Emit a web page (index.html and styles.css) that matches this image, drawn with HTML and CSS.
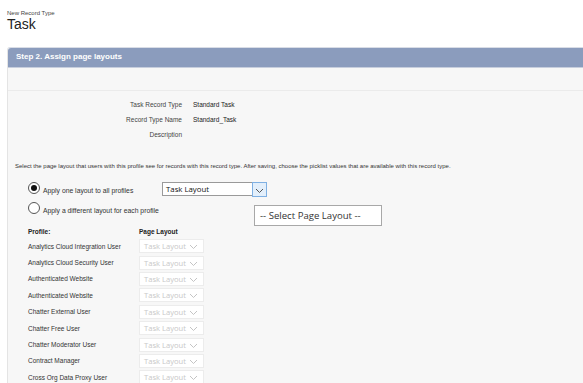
FILE: index.html
```html
<!DOCTYPE html>
<html>
<head>
<meta charset="utf-8">
<link rel="stylesheet" href="styles.css">
</head>
<body>
<div class="page">
  <div class="title">
    <div class="title-sub">New Record Type</div>
    <div class="title-main">Task</div>
  </div>
  <div class="panel">
    <div class="panel-head">Step 2. Assign page layouts</div>
    <div class="panel-top"></div>
    <div class="panel-body">
      <div class="details">
        <div class="dl">Task Record Type</div><div class="dv">Standard Task</div>
        <div class="dl">Record Type Name</div><div class="dv">Standard_Task</div>
        <div class="dl">Description</div><div class="dv"></div>
      </div>
      <p class="intro">Select the page layout that users with this profile see for records with this record type. After saving, choose the picklist values that are available with this record type.</p>
      <div class="options">
        <div class="opt">
          <span class="radio checked"></span>
          <span class="opt-label">Apply one layout to all profiles</span>
          <div class="sel-wrap">
            <div class="sel">Task Layout</div>
            <div class="sel-btn"><svg width="9" height="6" viewBox="0 0 9 6"><polyline points="1,1 4.5,4.5 8,1" fill="none" stroke="#555" stroke-width="1"/></svg></div>
            <div class="dropdown">-- Select Page Layout --</div>
          </div>
        </div>
        <div class="opt opt2">
          <span class="radio"></span>
          <span class="opt-label">Apply a different layout for each profile</span>
        </div>
      </div>
      <div class="profiles">
        <div class="ph">Profile:</div><div class="ph">Page Layout</div>
        <div class="pn">Analytics Cloud Integration User</div><div class="ps"><span>Task Layout</span><svg width="9" height="6" viewBox="0 0 9 6"><polyline points="1,1 4.5,4.5 8,1" fill="none" stroke="#c4c4c4" stroke-width="1"/></svg></div>
        <div class="pn">Analytics Cloud Security User</div><div class="ps"><span>Task Layout</span><svg width="9" height="6" viewBox="0 0 9 6"><polyline points="1,1 4.5,4.5 8,1" fill="none" stroke="#c4c4c4" stroke-width="1"/></svg></div>
        <div class="pn">Authenticated Website</div><div class="ps"><span>Task Layout</span><svg width="9" height="6" viewBox="0 0 9 6"><polyline points="1,1 4.5,4.5 8,1" fill="none" stroke="#c4c4c4" stroke-width="1"/></svg></div>
        <div class="pn">Authenticated Website</div><div class="ps"><span>Task Layout</span><svg width="9" height="6" viewBox="0 0 9 6"><polyline points="1,1 4.5,4.5 8,1" fill="none" stroke="#c4c4c4" stroke-width="1"/></svg></div>
        <div class="pn">Chatter External User</div><div class="ps"><span>Task Layout</span><svg width="9" height="6" viewBox="0 0 9 6"><polyline points="1,1 4.5,4.5 8,1" fill="none" stroke="#c4c4c4" stroke-width="1"/></svg></div>
        <div class="pn">Chatter Free User</div><div class="ps"><span>Task Layout</span><svg width="9" height="6" viewBox="0 0 9 6"><polyline points="1,1 4.5,4.5 8,1" fill="none" stroke="#c4c4c4" stroke-width="1"/></svg></div>
        <div class="pn">Chatter Moderator User</div><div class="ps"><span>Task Layout</span><svg width="9" height="6" viewBox="0 0 9 6"><polyline points="1,1 4.5,4.5 8,1" fill="none" stroke="#c4c4c4" stroke-width="1"/></svg></div>
        <div class="pn">Contract Manager</div><div class="ps"><span>Task Layout</span><svg width="9" height="6" viewBox="0 0 9 6"><polyline points="1,1 4.5,4.5 8,1" fill="none" stroke="#c4c4c4" stroke-width="1"/></svg></div>
        <div class="pn">Cross Org Data Proxy User</div><div class="ps"><span>Task Layout</span><svg width="9" height="6" viewBox="0 0 9 6"><polyline points="1,1 4.5,4.5 8,1" fill="none" stroke="#c4c4c4" stroke-width="1"/></svg></div>
      </div>
    </div>
  </div>
</div>
</body>
</html>
```
FILE: styles.css
```css
html, body {
  margin: 0;
  padding: 0;
  background: #fff;
  overflow: hidden;
}
body {
  font-family: "Liberation Sans", Arial, sans-serif;
  color: #333;
  height: 383px;
}
.page {
  padding-left: 7px;
  width: 600px;
}
.title {
  padding-top: 10px;
  height: 47px;
  box-sizing: border-box;
}
.title-sub {
  font-size: 6px;
  line-height: 7px;
  color: #444;
}
.title-main {
  font-size: 14px;
  line-height: 15px;
  color: #222;
}
.panel {
  background: #f7f7f7;
  border-top: 1px solid #d9dde6;
  border-left: 1px solid #e4e4e4;
  border-top-left-radius: 3px;
}
.panel-head {
  background: #8b9cbd;
  color: #fff;
  font-weight: bold;
  font-size: 8px;
  height: 19px;
  line-height: 18px;
  padding-left: 8px;
  border-top-left-radius: 3px;
  border-bottom: 1px solid #c7cedd;
}
.panel-top {
  height: 22px;
  border-bottom: 1px solid #ebebeb;
}
.panel-body {
  padding-top: 6px;
}
.details {
  display: grid;
  grid-template-columns: 174px auto;
  column-gap: 11px;
  row-gap: 0;
  font-size: 6.5px;
  line-height: 15px;
}
.dl {
  text-align: right;
  color: #444;
}
.dv {
  color: #222;
  min-height: 15px;
}
.intro {
  margin: 20px 0 0 7px;
  font-size: 6px;
  line-height: 8px;
  color: #333;
  white-space: nowrap;
}
.options {
  margin-top: 11px;
  padding-left: 20px;
}
.opt {
  display: flex;
  align-items: flex-start;
  height: 20px;
}
.opt2 {
  height: 22px;
}
.radio {
  width: 12px;
  height: 12px;
  box-sizing: border-box;
  border: 1px solid #555;
  border-radius: 50%;
  background: #fff;
  position: relative;
  margin-top: 1px;
  flex: none;
}
.radio.checked::after {
  content: "";
  position: absolute;
  left: 2px;
  top: 2px;
  width: 6px;
  height: 6px;
  border-radius: 50%;
  background: #111;
}
.opt-label {
  font-size: 6.8px;
  line-height: 8px;
  margin-top: 6px;
  margin-left: 3px;
  width: 119px;
  flex: none;
  color: #333;
  white-space: nowrap;
}
.sel-wrap {
  display: flex;
  position: relative;
  margin-top: 1px;
}
.sel {
  width: 90px;
  height: 14px;
  box-sizing: border-box;
  border: 1px solid #9a9a9a;
  border-right: none;
  background: #fff;
  font-family: "Open Sans", sans-serif;
  font-size: 7.8px;
  line-height: 12px;
  padding-left: 3px;
  color: #111;
}
.sel-btn {
  width: 15px;
  height: 15px;
  box-sizing: border-box;
  border: 1px solid #7fb0e3;
  background: #e3effb;
  display: flex;
  align-items: center;
  justify-content: center;
  padding-top: 3px;
}
.dropdown {
  position: absolute;
  left: 92px;
  top: 23px;
  width: 128px;
  height: 21px;
  box-sizing: border-box;
  border: 1px solid #a8a8a8;
  background: #fff;
  font-family: "Open Sans", sans-serif;
  font-size: 9.6px;
  line-height: 19px;
  padding-left: 5px;
  color: #333;
  white-space: nowrap;
}
.profiles {
  display: grid;
  grid-template-columns: 111px 65px;
  grid-template-rows: 13px;
  grid-auto-rows: 16.4px;
  padding-left: 20px;
  align-items: center;
  margin-top: 2px;
}
.ph {
  font-weight: bold;
  font-size: 6.5px;
  color: #222;
}
.pn {
  font-size: 6.5px;
  color: #333;
  white-space: nowrap;
}
.ps {
  height: 14px;
  box-sizing: border-box;
  border: 1px solid #ececec;
  background: #fff;
  font-family: "Open Sans", sans-serif;
  font-size: 7.6px;
  line-height: 12px;
  color: #c8c8c8;
  padding-left: 4px;
  padding-right: 5px;
  display: flex;
  align-items: center;
  justify-content: space-between;
  white-space: nowrap;
}
.ps svg {
  margin-top: 2px;
  flex: none;
}
```
